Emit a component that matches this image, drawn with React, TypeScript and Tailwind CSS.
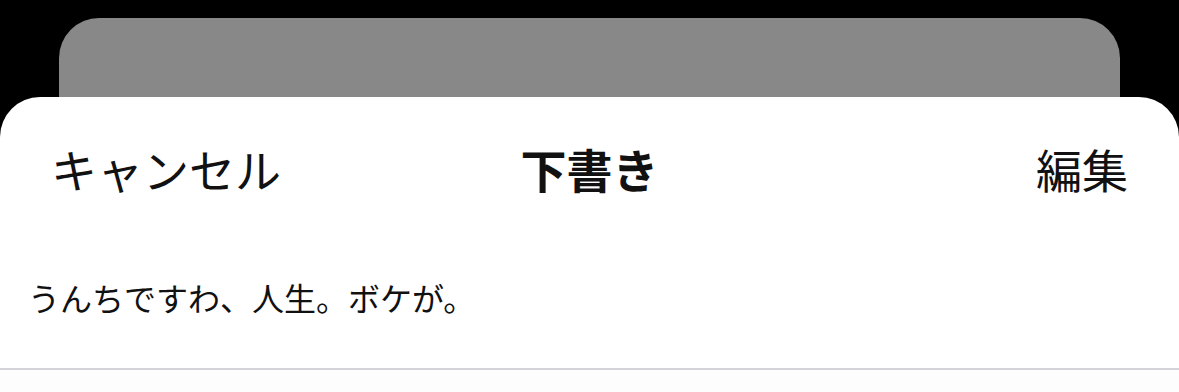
export default function App() {
  const font = { fontFamily: '"Noto Sans CJK JP", "Noto Sans", sans-serif' };
  return (
    <div className="w-[1179px] h-[392px] bg-black overflow-hidden flex flex-col pt-[18px]" style={font}>
      <div className="mx-[59px] h-[79px] shrink-0 rounded-t-[40px] bg-[#888888]" />
      <div className="flex-1 bg-white rounded-t-[40px] flex flex-col">
        <div className="h-[148px] shrink-0 grid grid-cols-[1fr_auto_1fr] items-center pb-[6px] pl-[51px] pr-[51px] text-[46px] leading-[56px] text-[#111111]">
          <div className="justify-self-start">キャンセル</div>
          <div className="font-bold">下書き</div>
          <div className="justify-self-end">編集</div>
        </div>
        <div className="pt-[32px] pl-[28px] h-[123px] shrink-0 text-[32px] leading-[40px] text-[#111111]">
          うんちですわ、人生。ボケが。
        </div>
        <div className="h-[2px] bg-[#d4d4d8] shrink-0" />
        <div className="flex-1 bg-[#fdfdfd]" />
      </div>
    </div>
  );
}
